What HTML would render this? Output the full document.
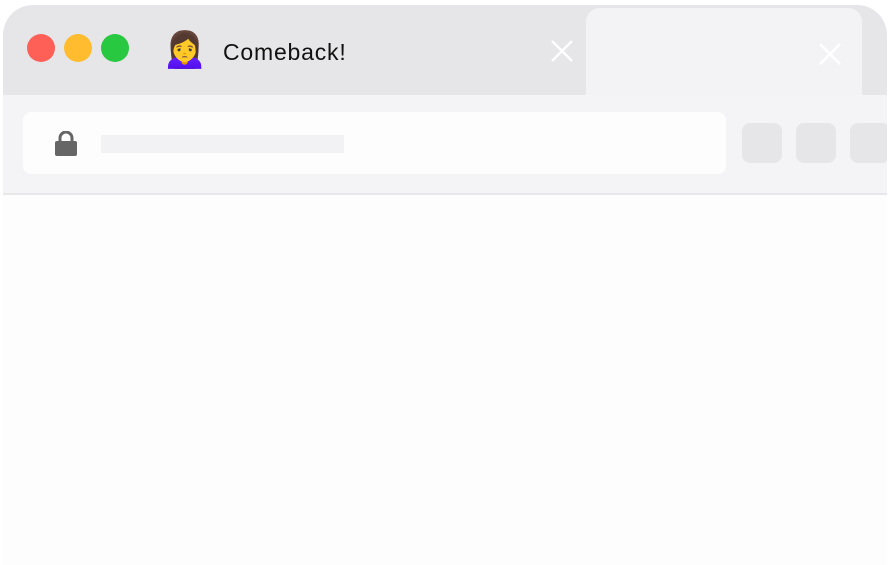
<!DOCTYPE html>
<html><head><meta charset="utf-8"><style>
html,body{margin:0;padding:0;background:#fff;}
body{width:890px;height:557px;position:relative;overflow:hidden;font-family:"Liberation Sans",sans-serif;}
.win{position:absolute;left:3px;top:5px;width:884px;height:560px;border-radius:30px 30px 0 0;overflow:hidden;background:#fdfdfd;}
.title{position:absolute;left:0;top:0;width:100%;height:90px;background:#e6e6e8;}
.dot{position:absolute;top:29px;width:28px;height:28px;border-radius:50%;}
.tab{position:absolute;left:583px;top:3px;width:276px;height:90px;background:#f3f3f5;border-radius:14px 14px 0 0;}
.toolbar{position:absolute;left:0;top:90px;width:100%;height:98px;background:#f4f4f6;border-bottom:2px solid #e8e8ea;}
.addr{position:absolute;left:20px;top:17px;width:703px;height:62px;background:#fdfdfd;border-radius:8px;}
.ph{position:absolute;left:78px;top:23px;width:243px;height:18px;background:#f2f2f4;}
.btn{position:absolute;top:28px;width:40px;height:40px;border-radius:8px;background:#e6e6e8;}
.x{position:absolute;top:34px;width:24px;height:24px;}
</style></head><body>
<div class="win">
 <div class="title">
  <div class="dot" style="left:24px;background:#fe5f57"></div>
  <div class="dot" style="left:61px;background:#febc2e"></div>
  <div class="dot" style="left:98px;background:#28c840"></div>
  <div style="position:absolute;left:158px;top:22px;font-size:38px;line-height:44px;font-family:'Noto Color Emoji',sans-serif">🙍‍♀️</div>
  <div style="position:absolute;left:220px;top:34px;font-size:23px;letter-spacing:0.8px;color:#111;line-height:26px">Comeback!</div>
  <svg class="x" style="left:547px" viewBox="0 0 24 24"><path d="M2 2L22 22M22 2L2 22" stroke="#fff" stroke-width="2.4"/></svg>
 </div>
 <div class="tab">
  <svg class="x" style="left:232px;top:34px" viewBox="0 0 24 24"><path d="M2 2L22 22M22 2L2 22" stroke="#fff" stroke-width="2.4"/></svg>
 </div>
 <div class="toolbar">
  <div class="addr">
   <svg style="position:absolute;left:32px;top:19px" width="22" height="25" viewBox="0 0 22 25"><path d="M5 11V7a6 6 0 0 1 12 0v4" fill="none" stroke="#666" stroke-width="3"/><rect x="0" y="10" width="22" height="15" rx="2" fill="#666"/></svg>
   <div class="ph"></div>
  </div>
  <div class="btn" style="left:739px"></div>
  <div class="btn" style="left:793px"></div>
  <div class="btn" style="left:847px"></div>
 </div>
</div>
</body></html>
